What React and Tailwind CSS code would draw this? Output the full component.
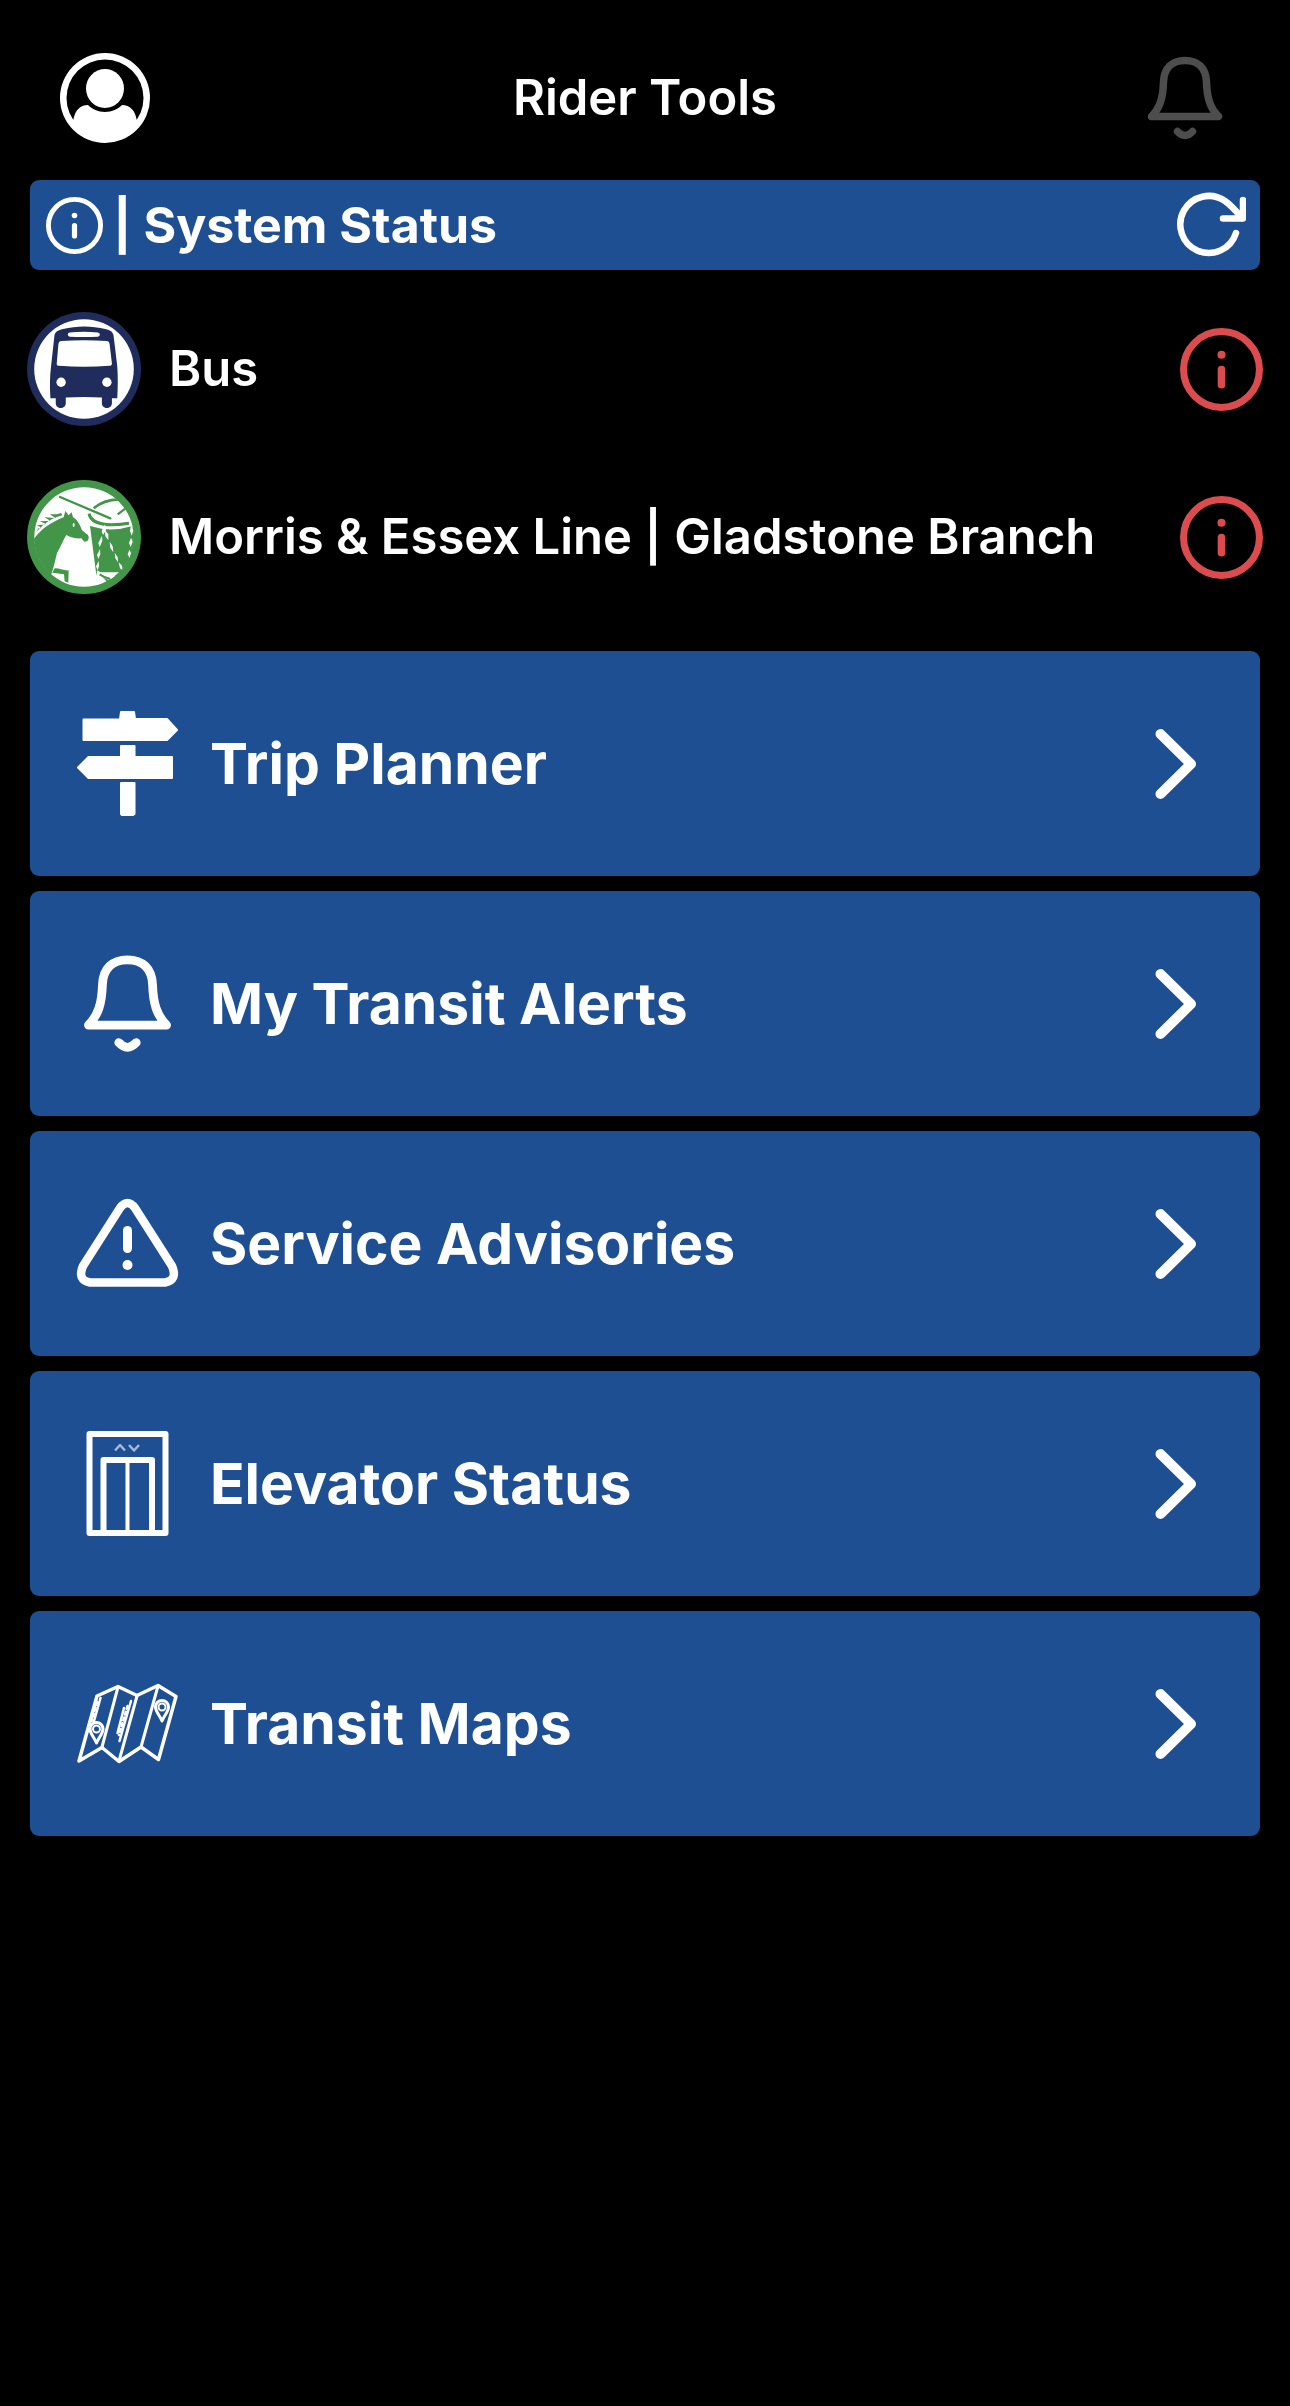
const FONT = "font-['Inter','Liberation_Sans',sans-serif]";

function ProfileIcon() {
  return (
    <svg viewBox="0 0 90 90" className="size-[90px]" aria-hidden="true">
      <circle cx="45" cy="45" r="45" fill="#fff" />
      <circle cx="45" cy="45" r="38.5" fill="#000" />
      <path
        d="M13 68C15 57 20 52 28 52C32 56 38 59 45 59S58 56 62 52C70 52 75 57 77 68L74 76C66 84 56 88 45 88S24 84 16 76Z"
        fill="#fff"
      />
      <ellipse cx="45" cy="35.5" rx="19" ry="19.5" fill="#fff" />
    </svg>
  );
}

function BellIcon({ className }) {
  return (
    <svg
      viewBox="0 0 90 90"
      className={className}
      fill="none"
      stroke="currentColor"
      strokeWidth="7.5"
      strokeLinecap="round"
      strokeLinejoin="round"
      aria-hidden="true"
    >
      <path d="M11.5 63.5C20 55 23 45 23.5 29C24 15 32 7.5 45 7.5S66 15 66.5 29C67 45 70 55 78.5 63.5Z" />
      <path d="M37.5 78.5Q45 86.500 52.5 78.5" />
    </svg>
  );
}

function InfoIcon({ className }) {
  return (
    <svg viewBox="0 0 82 82" className={className} fill="none" stroke="currentColor" strokeLinecap="round" aria-hidden="true">
      <circle cx="41" cy="41" r="37.5" strokeWidth="7" />
      <path d="M41 41V56" strokeWidth="7.5" />
      <circle cx="41" cy="26.5" r="4" fill="currentColor" stroke="none" />
    </svg>
  );
}

function RefreshIcon() {
  return (
    <svg
      viewBox="0 0 72 72"
      className="size-[72px]"
      fill="none"
      stroke="currentColor"
      strokeWidth="6.5"
      strokeLinecap="round"
      strokeLinejoin="round"
      aria-hidden="true"
    >
      <path d="M62 44A28.5 28.5 0 1 1 51 12Q57 16 68 29" />
      <path d="M69 11V29.5H49" />
    </svg>
  );
}

function BusLogo() {
  return (
    <svg viewBox="52 33 341 341" className="size-[114px] shrink-0" aria-hidden="true">
      <circle cx="222.5" cy="203.5" r="170.5" fill="#1f2c5c" />
      <circle cx="222.5" cy="203.5" r="149" fill="#fff" />
      <path
        d="M134 104C136 92 144 88 160 84C200 74 246 74 286 84C302 88 309 92 311 104L322 195C324 225 324 255 322 291H306V306C306 325 276 325 276 306V289Q222 286 168 289V306C168 325 138 325 138 306V291H122C120 255 120 225 124 195Z"
        fill="#1f2c5c"
      />
      <path d="M180 94Q222 90 264 94Q270 95 270 100T264 107Q222 109 180 107Q174 106 174 100T180 94Z" fill="#fff" />
      <path d="M154 120Q222 115 291 120Q298 121 299 128L306 186Q306 194 298 194Q222 199 148 194Q140 194 141 186L146 128Q147 121 154 120Z" fill="#fff" />
      <circle cx="154" cy="243" r="14" fill="#fff" />
      <circle cx="291" cy="243" r="14" fill="#fff" />
    </svg>
  );
}

function GladstoneLogo() {
  return (
    <svg viewBox="6 15 342 342" className="size-[114px] shrink-0" aria-hidden="true">
      <defs>
        <clipPath id="gladstone-disc">
          <circle cx="177" cy="186" r="150" />
        </clipPath>
      </defs>
      <circle cx="177" cy="186" r="171" fill="#439549" />
      <circle cx="177" cy="186" r="149" fill="#fff" />
      <g clipPath="url(#gladstone-disc)" fill="#439549">
        <path d="M20 202C40 168 76 142 116 127L121 108L131 121L140 112L144 127C158 135 164 148 171 166L188 179C193 184 192 193 186 199L178 200L169 190C152 191 136 187 124 180C115 194 108 214 96 234C90 258 86 278 79 298L20 310Z" />
        <path d="M34 172L40 160L50 159L36 150L54 149L64 147L44 139L62 138L76 137L58 127L80 128L92 129L74 118L96 118L108 114L112 121C84 128 58 143 34 172Z" />
        <ellipse cx="146" cy="150" rx="3" ry="6" fill="#fff" />
        <path d="M88 281C94 276 116 288 131 286L130 323L119 319L117 298L82 293Z" />
        <path d="M195 153Q258 173 320 154L340 190L330 265L285 292L226 292L214 300Z" />
        <path d="M234 308L266 304L246 320Z" />
      </g>
      <g clipPath="url(#gladstone-disc)" fill="none">
        <path d="M105 66L256 130" stroke="#439549" strokeWidth="7" strokeLinecap="round" />
        <path d="M206 100C224 84 248 74 282 73" stroke="#439549" strokeWidth="8" />
        <path d="M192 116C198 145 240 156 312 145" stroke="#439549" strokeWidth="9" />
        <path d="M278 118L305 98" stroke="#439549" strokeWidth="7" />
      </g>
      <g clipPath="url(#gladstone-disc)" fill="#fff">
        <path d="M240 148L243 166L234 180L230 168ZM231 182L232 198L224 216L220 204ZM225 222L226 238L220 252L216 240ZM221 258L222 274L218 286L213 274Z" />
        <path d="M240 166L250 178L250 196L241 184ZM254 200L263 214L265 232L256 219ZM269 234L278 246L279 262L271 250ZM281 262L291 272L293 286L285 280Z" />
        <path d="M318 150L325 166L320 182L315 168ZM318 188L323 200L317 216L312 204ZM313 224L318 234L314 250L308 238Z" />
        <path d="M216 286C230 294 246 304 272 304L254 316C240 310 226 304 214 308Z" />
      </g>
      <path d="M224 298Q238 308 256 312" fill="none" stroke="#439549" strokeWidth="6" />
    </svg>
  );
}

function SignpostIcon() {
  return (
    <svg viewBox="0 0 105 105" className="size-[105px]" fill="#fff" stroke="#fff" strokeWidth="2" strokeLinejoin="round" aria-hidden="true">
      <path d="M46 1H59L60 8H92L102 19L92 29H8.5V8.5H45Z" />
      <path d="M46 35H59.5V46H97V67H13.5L3 56.5L13.5 46H46Z" />
      <path d="M46 72H59.5V103L58 104H47L46 103Z" />
    </svg>
  );
}

function WarningIcon() {
  return (
    <svg viewBox="0 0 105 105" className="size-[105px]" fill="none" stroke="#fff" strokeLinecap="round" strokeLinejoin="round" aria-hidden="true">
      <path d="M45 17Q52.5 7 60 17L97 75Q103 89 90 91.5H15Q2 89 8 75Z" strokeWidth="8.5" />
      <path d="M52.5 39.5V57.5" strokeWidth="9" />
      <circle cx="52.5" cy="74" r="5" fill="#fff" stroke="none" />
    </svg>
  );
}

function ElevatorIcon() {
  return (
    <svg viewBox="0 0 105 105" className="size-[105px]" fill="none" stroke="#fff" strokeLinejoin="round" aria-hidden="true">
      <path d="M14.5 3H90.500V102H14.5Z" strokeWidth="6" />
      <path d="M28.5 101V29H77V101" strokeWidth="6" />
      <path d="M52.5 30V101" strokeWidth="4" />
      <path d="M40 19.5L45 14L50 19.5M54 14L59 19.5L64 14" strokeWidth="2.5" opacity="0.6" />
    </svg>
  );
}

function MapPin({ x, y }) {
  return (
    <g transform={`translate(${x} ${y})`}>
      <path d="M0 13C-3 6 -6.5 3.5 -6.5 -1A6.5 6.5 0 0 1 6.5 -1C6.5 3.5 3 6 0 13Z" strokeWidth="3" />
      <circle cx="0" cy="-1" r="3.5" strokeWidth="2" />
    </g>
  );
}

function MapIcon() {
  return (
    <svg viewBox="0 0 105 105" className="size-[105px]" fill="none" stroke="#fff" strokeLinecap="round" strokeLinejoin="round" aria-hidden="true">
      <path d="M4 90L22 25L43 15.5L62 24.5L83 14.5L101 25.5L83.5 88.5L66 76L44 90.5L27 76.5Z" strokeWidth="3.5" />
      <path d="M43 16L27 76M62 25L44 90M83 15L66 76" strokeWidth="3" />
      <path d="M25.5 27L18.5 52M56 30L44.5 70M49 37L42.5 62" strokeWidth="2.5" />
      <path d="M22 31L17 50M52.5 35L44 64" strokeWidth="2.5" strokeDasharray="3 3" />
      <MapPin x="21.5" y="59" />
      <MapPin x="87" y="37" />
    </svg>
  );
}

function ChevronIcon() {
  return (
    <svg viewBox="0 0 42 72" className="h-[72px] w-[42px]" fill="none" stroke="#fff" strokeWidth="10" strokeLinecap="round" strokeLinejoin="round" aria-hidden="true">
      <path d="M5.5 6L36 36L5.5 66" />
    </svg>
  );
}

const LINES = [
  { name: "Bus", Logo: BusLogo },
  { name: "Morris & Essex Line | Gladstone Branch", Logo: GladstoneLogo },
];

const TOOLS = [
  { label: "Trip Planner", href: "#trip-planner", icon: <SignpostIcon /> },
  { label: "My Transit Alerts", href: "#alerts", icon: <BellIcon className="size-[105px]" /> },
  { label: "Service Advisories", href: "#advisories", icon: <WarningIcon /> },
  { label: "Elevator Status", href: "#elevators", icon: <ElevatorIcon /> },
  { label: "Transit Maps", href: "#maps", icon: <MapIcon /> },
];

export default function App() {
  return (
    <div className={`min-h-screen bg-black text-white ${FONT}`}>
      <header className="flex items-center justify-between px-[60px] pt-[53px] pb-[37px]">
        <button type="button" aria-label="Profile">
          <ProfileIcon />
        </button>
        <h1 className="text-[49px] leading-[60px] font-semibold">Rider Tools</h1>
        <button type="button" aria-label="Notifications" className="text-[#4d4d4d]">
          <BellIcon className="size-[90px]" />
        </button>
      </header>

      <main>
        <section>
          <div className="mx-[30px] flex h-[90px] items-center justify-between rounded-[9px] bg-[#1f4f93] pr-3.5 pl-4">
            <div className="flex items-center gap-2.5">
              <InfoIcon className="size-[57px]" />
              <h2 className="text-[50px] leading-[60px] font-bold">| System Status</h2>
            </div>
            <button type="button" aria-label="Refresh status">
              <RefreshIcon />
            </button>
          </div>
          <ul className="px-[27px] pt-[15px] pb-[30px]">
            {LINES.map(({ name, Logo }) => (
              <li key={name} className="flex h-[168px] items-center gap-7">
                <Logo />
                <span className="flex-1 text-[49px] leading-[60px] font-semibold">{name}</span>
                <button type="button" aria-label={`${name} status details`} className="text-[#dc4c4f]">
                  <InfoIcon className="size-[83px]" />
                </button>
              </li>
            ))}
          </ul>
        </section>

        <nav aria-label="Rider tools" className="flex flex-col gap-[15px] px-[30px] pb-[30px]">
          {TOOLS.map(({ label, href, icon }) => (
            <a
              key={label}
              href={href}
              className="flex h-[225px] items-center gap-[30px] rounded-[9px] bg-[#1f4f93] pr-[63px] pl-[45px]"
            >
              {icon}
              <span className="flex-1 text-[57px] leading-[72px] font-bold">{label}</span>
              <ChevronIcon />
            </a>
          ))}
        </nav>
      </main>
    </div>
  );
}
